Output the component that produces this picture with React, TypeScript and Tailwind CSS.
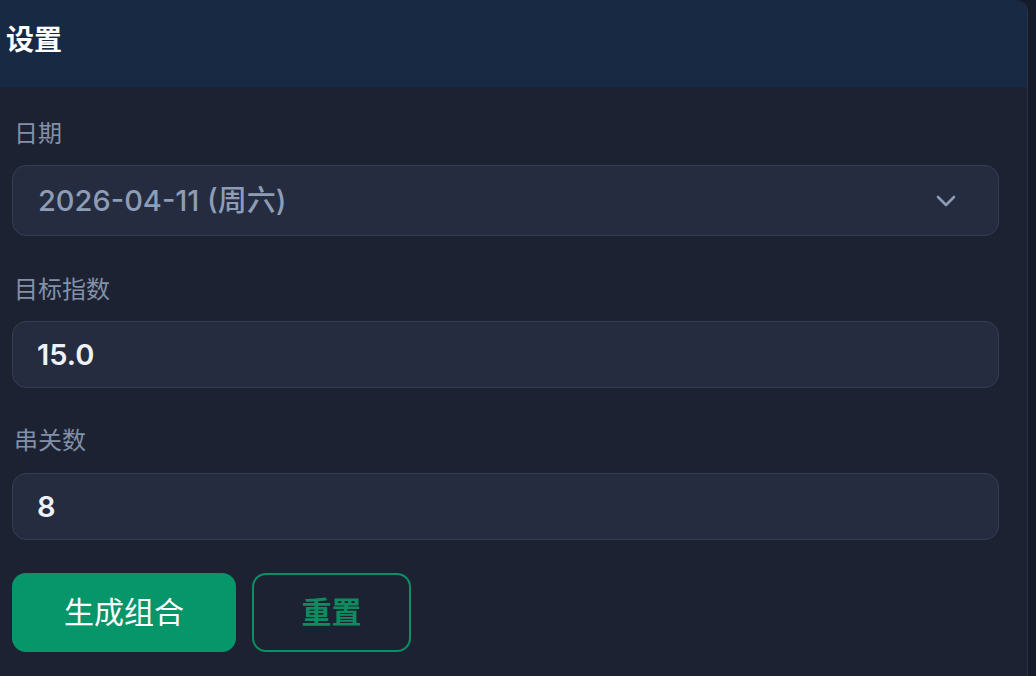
import { useState } from "react";

const font = { fontFamily: 'Inter, "Noto Sans CJK SC", sans-serif' };

function Chevron() {
  return (
    <svg width="20" height="12" viewBox="0 0 20 12" fill="none" className="shrink-0">
      <path d="M2 2l8 8 8-8" stroke="#8c9ab3" strokeWidth="2.6" strokeLinecap="round" strokeLinejoin="round" />
    </svg>
  );
}

export default function App() {
  const [target, setTarget] = useState("15.0");
  const [legs, setLegs] = useState("8");

  return (
    <div className="flex h-[676px] w-[1036px] overflow-hidden bg-[#151b28]" style={font}>
      <div className="flex h-full w-[1028px] flex-col overflow-hidden rounded-tr-xl border-r border-[#2b3244] bg-[#1d2232]">
        {/* Header */}
        <div className="flex h-[87px] shrink-0 items-center bg-[#172943] pb-[8px] pl-[6px]">
          <h2 className="text-[28px] font-bold leading-none text-white">设置</h2>
        </div>

        <div className="flex flex-col pl-3 pr-[28px] pt-[31px]">
          {/* 日期 */}
          <label className="ml-[2px] text-[24px] leading-[32px] text-[#8291a8]">日期</label>
          <button className="mt-[15px] flex h-[71px] w-full items-center justify-between rounded-[14px] border border-[#353e53] bg-[#252c3f] pl-[25px] pr-[42px] text-left">
            <span className="text-[29px] font-medium text-[#8e9db6]">2026-04-11 (周六)</span>
            <Chevron />
          </button>

          {/* 目标指数 */}
          <label className="ml-[2px] mt-[38px] text-[24px] leading-[32px] text-[#8291a8]">目标指数</label>
          <input
            value={target}
            onChange={(e) => setTarget(e.target.value)}
            className="mt-[15px] h-[67px] w-full rounded-[14px] border border-[#353e53] bg-[#252c3f] px-[24px] text-[29px] font-semibold text-[#eef2f7] outline-none"
          />

          {/* 串关数 */}
          <label className="ml-[2px] mt-[37px] text-[24px] leading-[32px] text-[#8291a8]">串关数</label>
          <input
            value={legs}
            onChange={(e) => setLegs(e.target.value)}
            className="mt-[16px] h-[67px] w-full rounded-[14px] border border-[#353e53] bg-[#252c3f] px-[24px] text-[29px] font-semibold text-[#eef2f7] outline-none"
          />

          {/* Actions */}
          <div className="mt-[33px] flex gap-4">
            <button className="flex h-[79px] w-[224px] items-center justify-center rounded-[14px] bg-[#07956a] text-[30px] font-normal text-white">
              生成组合
            </button>
            <button className="flex h-[79px] w-[159px] items-center justify-center rounded-[14px] border-2 border-[#0a9064] text-[30px] font-bold text-[#0e8c5f]">
              重置
            </button>
          </div>
        </div>
      </div>
    </div>
  );
}
